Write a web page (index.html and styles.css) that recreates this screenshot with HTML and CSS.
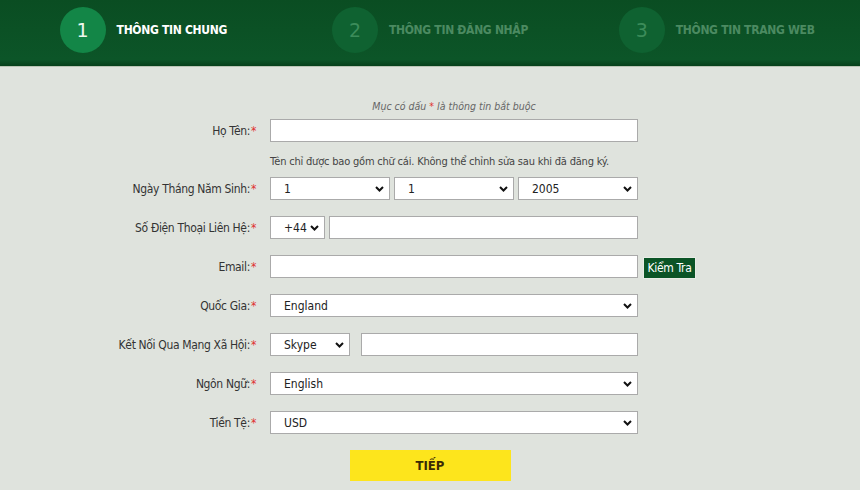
FILE: index.html
```html
<!DOCTYPE html>
<html lang="vi">
<head>
<meta charset="utf-8">
<link rel="stylesheet" href="styles.css">
</head>
<body>
<header class="steps">
  <div class="step active"><span class="num">1</span><span class="title">THÔNG TIN CHUNG</span></div>
  <div class="step"><span class="num">2</span><span class="title">THÔNG TIN ĐĂNG NHẬP</span></div>
  <div class="step"><span class="num">3</span><span class="title">THÔNG TIN TRANG WEB</span></div>
</header>
<main class="form">
  <div class="row note-row"><div class="label"></div><div class="ctrl note"><span>Mục có dấu <span class="req">*</span> là thông tin bắt buộc</span></div></div>
  <div class="row"><div class="label">Họ Tên:<span class="req">*</span></div><div class="ctrl"><input class="inp full" type="text"></div></div>
  <div class="row hint-row"><div class="label"></div><div class="ctrl hint">Tên chỉ được bao gồm chữ cái. Không thể chỉnh sửa sau khi đã đăng ký.</div></div>
  <div class="row"><div class="label">Ngày Tháng Năm Sinh:<span class="req">*</span></div><div class="ctrl">
    <select class="sel date"><option>1</option></select>
    <select class="sel date"><option>1</option></select>
    <select class="sel date"><option>2005</option></select>
  </div></div>
  <div class="row gap"><div class="label">Số Điện Thoại Liên Hệ:<span class="req">*</span></div><div class="ctrl">
    <select class="sel code"><option>+44</option></select>
    <input class="inp grow" type="text">
  </div></div>
  <div class="row gap"><div class="label">Email:<span class="req">*</span></div><div class="ctrl">
    <input class="inp full" type="text">
    <button class="check" type="button">Kiểm Tra</button>
  </div></div>
  <div class="row gap"><div class="label">Quốc Gia:<span class="req">*</span></div><div class="ctrl"><select class="sel full"><option>England</option></select></div></div>
  <div class="row gap"><div class="label">Kết Nối Qua Mạng Xã Hội:<span class="req">*</span></div><div class="ctrl">
    <select class="sel social"><option>Skype</option></select>
    <input class="inp grow" type="text">
  </div></div>
  <div class="row gap"><div class="label">Ngôn Ngữ:<span class="req">*</span></div><div class="ctrl"><select class="sel full"><option>English</option></select></div></div>
  <div class="row gap"><div class="label">Tiền Tệ:<span class="req">*</span></div><div class="ctrl"><select class="sel full"><option>USD</option></select></div></div>
  <div class="actions"><button class="next" type="button">TIẾP</button></div>
</main>
</body>
</html>
```
FILE: styles.css
```css
* { box-sizing: border-box; }
html, body { margin: 0; padding: 0; }
body {
  background: #dfe3dd;
  font-family: "DejaVu Sans Condensed", "DejaVu Sans", sans-serif;
  font-size: 12px;
  color: #333;
  width: 860px;
  height: 490px;
  overflow: hidden;
}
.steps {
  height: 67px;
  background: linear-gradient(#0a4d22, #0c5528 90%, #06401a);
  border-bottom: 1px solid #b9c4b4;
  display: grid;
  grid-template-columns: 1fr 1fr 1fr;
  align-items: start;
}
.step {
  display: flex;
  justify-content: center;
  align-items: center;
  padding-top: 7px;
  gap: 11px;
}
.num {
  width: 46px;
  height: 46px;
  border-radius: 50%;
  background: #0f6231;
  color: #3c8c5a;
  display: flex;
  align-items: center;
  justify-content: center;
  font-size: 19px;
  font-family: "DejaVu Sans", sans-serif;
}
.title {
  font-weight: bold;
  font-size: 12px;
  color: #4b8a61;
  letter-spacing: -0.3px;
}
.step.active .num { background: #138647; color: #eef7ee; }
.step.active .title { color: #fff; }
.form { padding-top: 33px; }
.row { display: flex; align-items: center; height: 23px; }
.row.gap { margin-top: 16px; }
.label {
  width: 256px;
  text-align: right;
  flex: none;
  letter-spacing: -0.35px;
}
.req { color: #e0312f; margin-left: 1px; }
.ctrl {
  margin-left: 14px;
  width: 368px;
  display: flex;
  gap: 4px;
  align-items: center;
  flex: none;
}
.note-row { height: 12px; margin-bottom: 7px; }
.note {
  justify-content: center;
  font-style: italic;
  font-size: 10.5px;
  color: #666;
}
.note .req { margin: 0; font-style: normal; }
.hint-row { height: 14px; margin-top: 12px; margin-bottom: 9px; }
.hint { font-size: 11px; color: #444; letter-spacing: -0.2px; }
.inp, .sel {
  height: 23px;
  border: 1px solid #aaa;
  background-color: #fff;
  font-family: inherit;
  font-size: 12px;
  color: #222;
  margin: 0;
  outline: none;
  border-radius: 0;
}
.inp { padding: 0 8px; }
.sel {
  appearance: none;
  -webkit-appearance: none;
  padding: 0 20px 0 13px;
  background-image: url("data:image/svg+xml,%3Csvg xmlns='http://www.w3.org/2000/svg' width='9' height='6' viewBox='0 0 9 6'%3E%3Cpath d='M1 1l3.5 3.5L8 1' fill='none' stroke='%23111' stroke-width='2'/%3E%3C/svg%3E");
  background-repeat: no-repeat;
  background-position: right 5px center;
}
.full { width: 368px; flex: none; }
.date { width: 120px; flex: none; }
.code { width: 55px; flex: none; padding-right: 10px; }
.social { width: 80px; flex: none; margin-right: 7px; }
.grow { flex: 1; min-width: 0; }
.check {
  flex: none;
  margin-left: 1px;
  height: 22px;
  margin-top: 3px;
  width: 53px;
  padding: 0;
  border: 1px solid #e8ece6;
  background: #0b5426;
  color: #fff;
  font-family: inherit;
  font-size: 12px;
  letter-spacing: -0.3px;
}
.actions { display: flex; justify-content: center; margin-top: 16px; }
.next {
  width: 161px;
  height: 31px;
  border: none;
  background: #fde51c;
  color: #3a2a05;
  font-family: inherit;
  font-weight: bold;
  font-size: 13px;
  padding: 0;
}
```
